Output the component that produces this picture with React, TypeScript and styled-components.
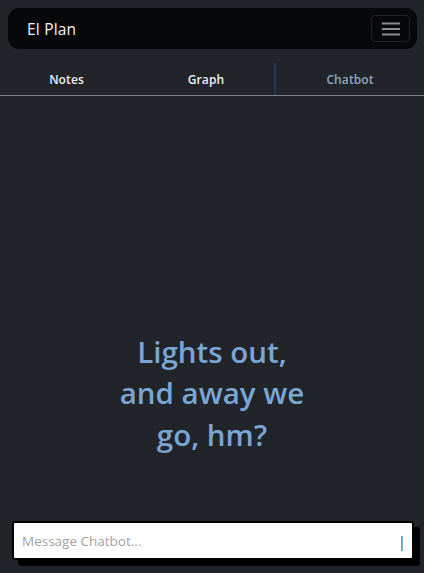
import React from "react";
import styled, { createGlobalStyle } from "styled-components";

const Global = createGlobalStyle`
  html, body { margin: 0; padding: 0; background: #212429; }
  body { font-family: "Open Sans", "Noto Sans", sans-serif; }
  * { box-sizing: border-box; }
`;

const Page = styled.div`
  height: 100vh;
  display: flex;
  flex-direction: column;
  background: #212429;
`;

const Header = styled.header`
  margin: 8px 7px 0 8px;
  height: 41px;
  background: #070809;
  border-radius: 11px;
  display: flex;
  align-items: center;
  justify-content: space-between;
  padding: 0 7px 0 19px;
`;

const Brand = styled.span`
  color: #f2f2f2;
  font-size: 15.5px;
  font-weight: 500;
  letter-spacing: 0.2px;
`;

const MenuButton = styled.button`
  width: 39px;
  height: 27px;
  background: transparent;
  border: 1px solid #232427;
  border-radius: 4px;
  display: flex;
  align-items: center;
  justify-content: center;
  padding: 0;
`;

const Tabs = styled.nav`
  margin-top: 14px;
  display: grid;
  grid-template-columns: 133px 141px 1fr;
  height: 33px;
  border-bottom: 1px solid #7d8086;
`;

const Tab = styled.div<{ $active?: boolean; $shift?: number }>`
  display: flex;
  align-items: center;
  justify-content: center;
  padding-left: ${(p) => p.$shift ?? 0}px;
  font-size: 12px;
  font-weight: 600;
  letter-spacing: 0.1px;
  color: ${(p) => (p.$active ? "#8fa6c2" : "#f0f0f0")};
  border-left: ${(p) => (p.$active ? "2px solid #1e3a5e" : "none")};
`;

const Content = styled.main`
  flex: 1;
  display: flex;
  flex-direction: column;
  align-items: center;
  justify-content: flex-end;
  padding-bottom: 66px;
`;

const Title = styled.h1`
  margin: 0;
  width: 210px;
  text-align: center;
  color: #7ba6d4;
  font-size: 29.5px;
  font-weight: 600;
  line-height: 41.5px;
`;

const Composer = styled.div`
  padding: 0 10px 13px 12px;
`;

const InputBox = styled.div`
  height: 39px;
  background: #ffffff;
  border: 2px solid #000;
  border-radius: 3px;
  box-shadow: 6px 6px 1px #000;
  display: flex;
  align-items: center;
  justify-content: space-between;
  padding: 0 6px 0 8px;
`;

const Placeholder = styled.span`
  color: #a2a2a2;
  font-size: 13.5px;
`;

const Caret = styled.span`
  color: #444444;
  font-size: 15px;
`;

function Hamburger() {
  return (
    <svg width="18" height="14" viewBox="0 0 18 14">
      <g stroke="#8c8c8c" strokeWidth="2">
        <line x1="0" y1="1.5" x2="18" y2="1.5" />
        <line x1="0" y1="7" x2="18" y2="7" />
        <line x1="0" y1="12.5" x2="18" y2="12.5" />
      </g>
    </svg>
  );
}

export default function App() {
  return (
    <>
      <Global />
      <Page>
        <Header>
          <Brand>El Plan</Brand>
          <MenuButton aria-label="menu">
            <Hamburger />
          </MenuButton>
        </Header>
        <Tabs>
          <Tab>Notes</Tab>
          <Tab $shift={5}>Graph</Tab>
          <Tab $active>Chatbot</Tab>
        </Tabs>
        <Content>
          <Title>Lights out, and away we go, hm?</Title>
        </Content>
        <Composer>
          <InputBox>
            <Placeholder>Message Chatbot...</Placeholder>
            <Caret>|</Caret>
          </InputBox>
        </Composer>
      </Page>
    </>
  );
}
